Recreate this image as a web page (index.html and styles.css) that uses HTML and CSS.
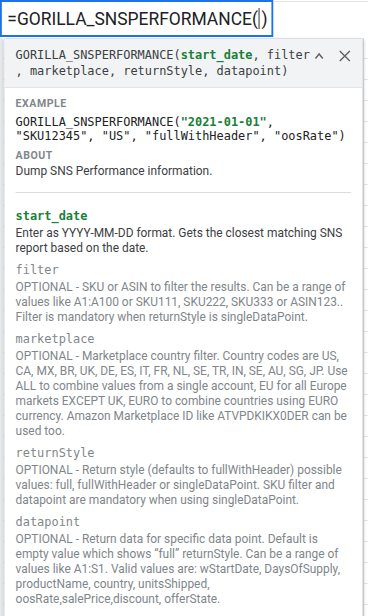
FILE: index.html
```html
<!DOCTYPE html>
<html lang="en">
<head>
  <meta charset="UTF-8">
  <meta name="viewport" content="width=device-width, initial-scale=1.0">
  <title>Formula Help</title>
  <link rel="stylesheet" href="styles.css">
</head>
<body>
  <div class="sheet">
    <div class="top-row">
      <div class="cell-editor">=GORILLA_SNSPERFORMANCE(<span class="caret"></span>)</div>
      <div class="next-cell"></div>
    </div>

    <div class="help-popup">
      <div class="help-head">
        <div class="signature">GORILLA_SNSPERFORMANCE(<span class="arg-active">start_date</span>, filter<br>, marketplace, returnStyle, datapoint)</div>
        <div class="head-icons">
          <svg class="icon-collapse" width="10" height="8" viewBox="0 0 10 8">
            <path d="M1 6.5 L5 2 L9 6.5" fill="none" stroke="#5f6368" stroke-width="1.6"/>
          </svg>
          <svg class="icon-close" width="14" height="12" viewBox="0 0 14 12">
            <path d="M1.5 1 L12.5 11 M12.5 1 L1.5 11" fill="none" stroke="#5f6368" stroke-width="1.6"/>
          </svg>
        </div>
      </div>

      <div class="help-body">
        <div class="section-label">EXAMPLE</div>
        <div class="code">GORILLA_SNSPERFORMANCE(<span class="arg-active">"2021-01-01"</span>,<br>"SKU12345", "US", "fullWithHeader", "oosRate")</div>
        <div class="section-label">ABOUT</div>
        <div class="about">Dump SNS Performance information.</div>

        <hr class="divider">

        <div class="param current">
          <div class="param-name">start_date</div>
          <div class="param-desc">Enter as YYYY-MM-DD format. Gets the closest matching SNS report based on the date.</div>
        </div>
        <div class="param">
          <div class="param-name">filter</div>
          <div class="param-desc">OPTIONAL - SKU or ASIN to filter the results. Can be a range of values like A1:A100 or SKU111, SKU222, SKU333 or ASIN123.. Filter is mandatory when returnStyle is singleDataPoint.</div>
        </div>
        <div class="param">
          <div class="param-name">marketplace</div>
          <div class="param-desc">OPTIONAL - Marketplace country filter. Country codes are US, CA, MX, BR, UK, DE, ES, IT, FR, NL, SE, TR, IN, SE, AU, SG, JP. Use ALL to combine values from a single account, EU for all Europe markets EXCEPT UK, EURO to combine countries using EURO currency. Amazon Marketplace ID like ATVPDKIKX0DER can be used too.</div>
        </div>
        <div class="param">
          <div class="param-name">returnStyle</div>
          <div class="param-desc">OPTIONAL - Return style (defaults to fullWithHeader) possible values: full, fullWithHeader or singleDataPoint. SKU filter and datapoint are mandatory when using singleDataPoint.</div>
        </div>
        <div class="param">
          <div class="param-name">datapoint</div>
          <div class="param-desc">OPTIONAL - Return data for specific data point. Default is empty value which shows “full” returnStyle. Can be a range of values like A1:S1. Valid values are: wStartDate, DaysOfSupply, productName, country, unitsShipped, oosRate,salePrice,discount, offerState.</div>
        </div>
      </div>
    </div>
  </div>
</body>
</html>
```

FILE: styles.css
```css
body {
  margin: 0;
  padding: 0;
  width: 368px;
  height: 616px;
  overflow: hidden;
  font-family: Roboto, Arial, sans-serif;
  background: #fff;
}

/* the sheet is laid out wide and squeezed to the window, like the capture */
.sheet {
  width: 401px;
  height: 616px;
  box-sizing: border-box;
  border-left: 3px solid #e8eaed;
  transform: scaleX(0.917);
  transform-origin: 0 0;
  background:
    linear-gradient(to right, transparent 393px, #e2e3e3 393px, #e2e3e3 394px, transparent 394px),
    repeating-linear-gradient(to bottom, transparent 0, transparent 20px, #e2e3e3 20px, #e2e3e3 21px);
  background-position: 0 0, 0 -4px;
}

.top-row {
  display: flex;
  height: 38px;
  margin-left: -3px;
  background: #fff;
}

.cell-editor {
  width: 298px;
  height: 37px;
  box-sizing: border-box;
  border: 2px solid #1a73e8;
  padding: 0 0 0 6px;
  font-size: 19px;
  line-height: 34px;
  color: #202124;
  white-space: nowrap;
  background: #fff;
}

.caret {
  display: inline-block;
  width: 1px;
  height: 21px;
  background: #202124;
  vertical-align: -4px;
  margin: 0 2px 0 1px;
}

.next-cell {
  flex: 1;
  border-top: 1px solid #e2e3e3;
  margin-top: 1px;
}

.help-popup {
  width: 392px;
  margin-left: 1px;
  box-sizing: border-box;
  border: 1px solid #dadce0;
  border-radius: 2px;
  background: #fff;
  box-shadow: 0 1px 3px rgba(60, 64, 67, 0.25);
}

.help-head {
  display: flex;
  justify-content: space-between;
  background: #f1f3f4;
  border-bottom: 1px solid #e3e5e8;
  padding: 8px 12px 8px 12px;
}

.signature {
  font-family: "DejaVu Sans Mono", "Liberation Mono", monospace;
  font-size: 13px;
  line-height: 16px;
  color: #3c4043;
  white-space: nowrap;
}

.arg-active {
  color: #188038;
  font-weight: bold;
}

.head-icons {
  display: flex;
  align-items: center;
  gap: 16px;
  height: 16px;
  padding-top: 1px;
}

.help-body {
  padding: 7px 12px 10px 12px;
}

.section-label {
  font-size: 11.5px;
  font-weight: bold;
  letter-spacing: 0.6px;
  color: #80868b;
  line-height: 16px;
}

.code {
  font-family: "DejaVu Sans Mono", "Liberation Mono", monospace;
  font-size: 13px;
  line-height: 14px;
  color: #202124;
  margin: 4px 0 4px;
}

.about {
  font-size: 13px;
  line-height: 16px;
  color: #3c4043;
}

.divider {
  border: none;
  border-top: 1px solid #dadce0;
  margin: 13px 0 14px;
}

.param {
  margin-bottom: 6px;
}

.param-name {
  font-family: "DejaVu Sans Mono", "Liberation Mono", monospace;
  font-size: 13px;
  line-height: 18px;
  color: #80868b;
}

.param-desc {
  font-size: 13px;
  line-height: 15px;
  color: #80868b;
}

.current .param-name {
  color: #188038;
  font-weight: bold;
}

.current .param-desc {
  color: #3c4043;
}
```
